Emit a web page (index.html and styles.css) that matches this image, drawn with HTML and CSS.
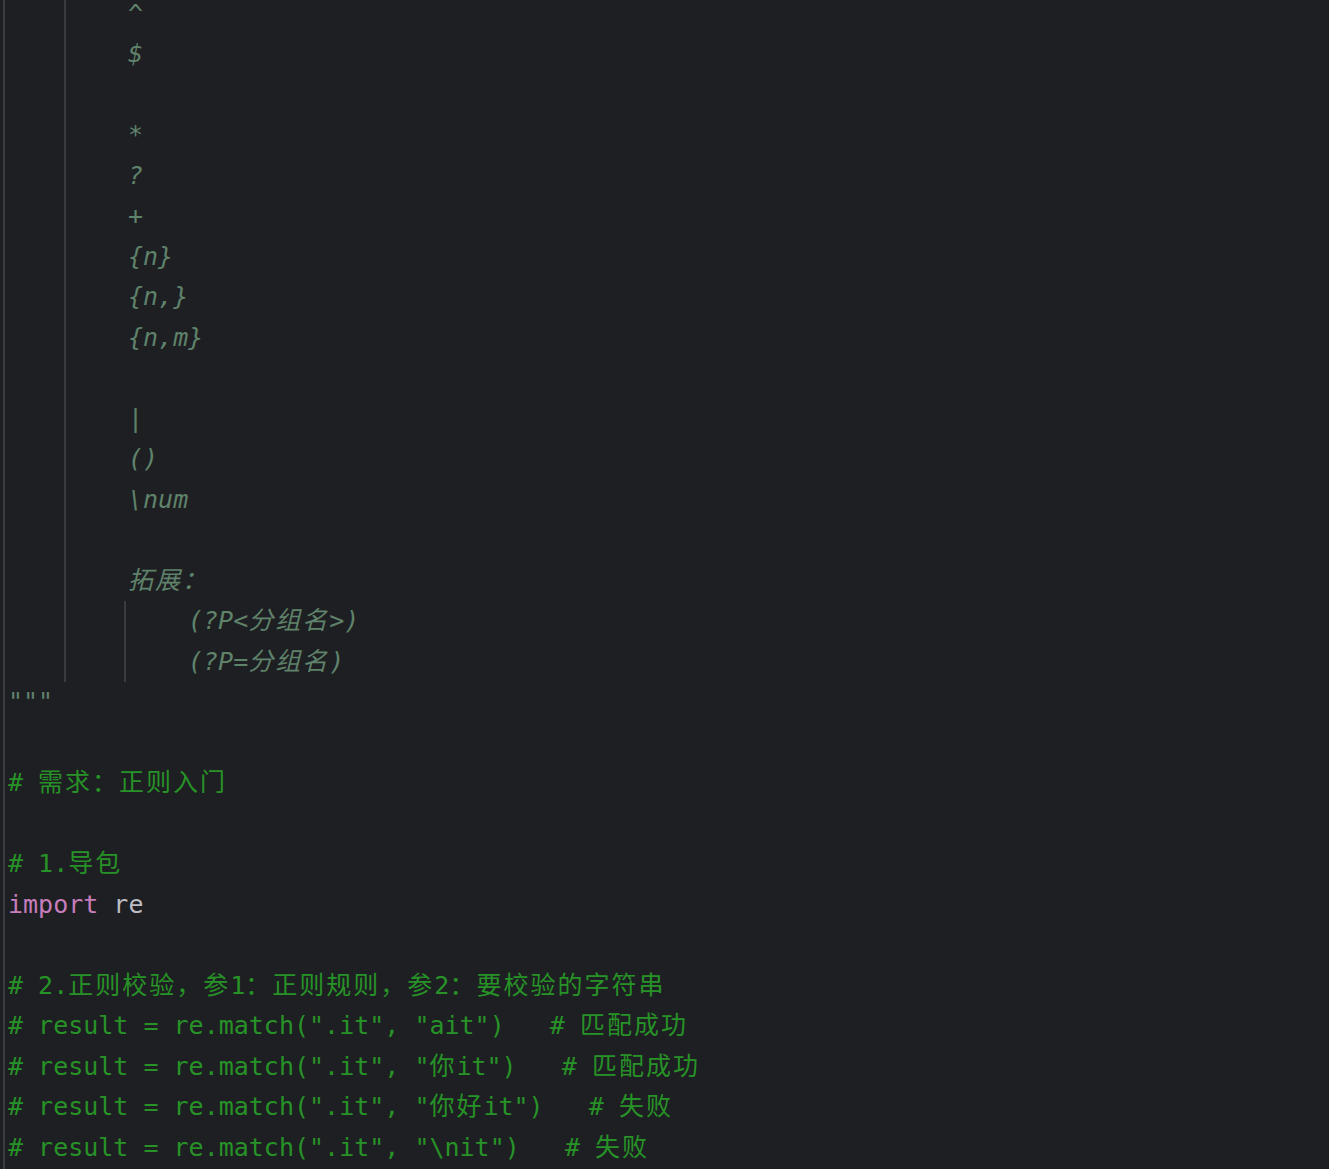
FILE: index.html
```html
<!DOCTYPE html>
<html lang="zh-CN">
<head>
    <meta charset="UTF-8">
    <meta name="viewport" content="width=device-width, initial-scale=1.0">
    <title>re_demo.py</title>
    <link rel="stylesheet" href="styles.css">
</head>
<body>
    <div class="editor">
        <!-- docstring body, indented under the opening """ -->
        <div class="guide doc">
            <div class="ln in1">^</div>
            <div class="ln in1">$</div>
            <div class="ln"></div>
            <div class="ln in1">*</div>
            <div class="ln in1">?</div>
            <div class="ln in1">+</div>
            <div class="ln in1">{n}</div>
            <div class="ln in1">{n,}</div>
            <div class="ln in1">{n,m}</div>
            <div class="ln"></div>
            <div class="ln in1">|</div>
            <div class="ln in1">()</div>
            <div class="ln in1">\num</div>
            <div class="ln"></div>
            <div class="ln in1"><span class="zh">拓展：</span></div>
            <div class="guide nested">
                <div class="ln in1">(?P&lt;<span class="zh">分组名</span>&gt;)</div>
                <div class="ln in1">(?P=<span class="zh">分组名</span>)</div>
            </div>
        </div>
        <div class="ln doc">"""</div>
        <div class="ln"></div>
        <div class="ln cmt"># <span class="zh">需求：正则入门</span></div>
        <div class="ln"></div>
        <div class="ln cmt"># 1.<span class="zh">导包</span></div>
        <div class="ln"><span class="kw">import</span> re</div>
        <div class="ln"></div>
        <div class="ln cmt"># 2.<span class="zh">正则校验，参</span>1<span class="zh">：正则规则，参</span>2<span class="zh">：要校验的字符串</span></div>
        <div class="ln cmt"># result = re.match(".it", "ait")   # <span class="zh">匹配成功</span></div>
        <div class="ln cmt"># result = re.match(".it", "<span class="zh">你</span>it")   # <span class="zh">匹配成功</span></div>
        <div class="ln cmt"># result = re.match(".it", "<span class="zh">你好</span>it")   # <span class="zh">失败</span></div>
        <div class="ln cmt"># result = re.match(".it", "\nit")   # <span class="zh">失败</span></div>
    </div>
</body>
</html>
```
FILE: styles.css
```css
/* Dark editor pane */
html,
body {
    margin: 0;
    height: 100%;
    overflow: hidden;
}

body {
    background-color: #1e1f22;
    padding-left: 3px;
    box-sizing: border-box;
}

.editor {
    border-left: 2px solid #393b40;
    padding-left: 3px;
    margin-top: -6.5px;
    min-height: 1200px;
    font-family: "DejaVu Sans Mono", "Noto Sans CJK SC", monospace;
    font-size: 25px;
    color: #bcbec4;
}

.ln {
    height: 40.5px;
    line-height: 40.5px;
    white-space: pre;
}

/* CJK glyphs are a little wider than two half columns here */
.zh {
    letter-spacing: 2px;
}

/* indent guides */
.guide {
    border-left: 2px solid #393b40;
}

.editor > .guide {
    margin-left: 56px;
}

.guide .in1 {
    padding-left: 62px;
}

.nested {
    margin-left: 58px;
}

/* syntax colours */
.doc {
    color: #5f826b;
    font-style: italic;
}

.cmt {
    color: #279227;
}

.kw {
    color: #c77dbb;
}
```
